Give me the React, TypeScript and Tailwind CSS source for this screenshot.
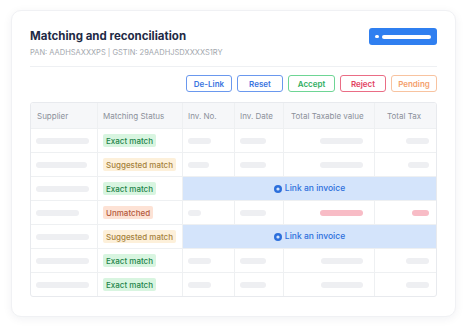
import React from "react";

type Status = "exact" | "suggested" | "unmatched";
type Row = {
  sup: number;
  status: Status;
  link?: boolean;
  inv?: number;
  date?: number;
  tax?: number;
  tt?: number;
  pink?: boolean;
};

const rows: Row[] = [
  { sup: 53, status: "exact", inv: 23, date: 26, tax: 43, tt: 23 },
  { sup: 51, status: "suggested", inv: 21, date: 26, tax: 43, tt: 21 },
  { sup: 53, status: "exact", link: true },
  { sup: 43, status: "unmatched", inv: 13, date: 26, tax: 43, tt: 17, pink: true },
  { sup: 53, status: "suggested", link: true },
  { sup: 53, status: "exact", inv: 23, date: 26, tax: 42, tt: 23 },
  { sup: 53, status: "exact", inv: 23, date: 26, tax: 42, tt: 23 },
];

function Bar({ w, pink }: { w: number; pink?: boolean }) {
  return (
    <div
      className={pink ? "h-[6px] rounded-full bg-[#f8bcc6]" : "h-[6px] rounded-full bg-[#eeeff2]"}
      style={{ width: w }}
    />
  );
}

function Badge({ s }: { s: Status }) {
  if (s === "exact")
    return (
      <span className="inline-flex h-[13px] items-center rounded-[2px] bg-[#d8f5e0] px-[3px] text-[8px] font-medium leading-none text-[#23844a]">
        Exact match
      </span>
    );
  if (s === "suggested")
    return (
      <span className="inline-flex h-[13px] items-center rounded-[2px] bg-[#fdf0da] px-[3px] text-[8px] font-medium leading-none text-[#a5823c]">
        Suggested match
      </span>
    );
  return (
    <span className="inline-flex h-[13px] items-center rounded-[2px] bg-[#fde2d5] px-[3px] text-[8px] font-medium leading-none text-[#b4593c]">
      Unmatched
    </span>
  );
}

const cell = "flex h-[24px] items-center border-t border-[#eef0f2]";

export default function App() {
  return (
    <div
      className="min-h-[332px] w-[474px] bg-white pl-[11px] pt-[10px]"
      style={{ fontFamily: "Inter, 'Noto Sans', sans-serif" }}
    >
      <div className="w-[445px] rounded-[10px] border border-[#f0f1f4] bg-white px-[18px] pb-[19px] pt-[17px] shadow-[0_2px_10px_rgba(20,30,60,0.06)]">
        <div className="flex items-start justify-between">
          <div>
            <div className="text-[11.5px] font-bold leading-[16px] text-[#1e2a45]">
              Matching and reconciliation
            </div>
            <div className="mt-[4px] text-[7.5px] leading-[10px] text-[#a3a7ae]">
              PAN: AADHSAXXXPS | GSTIN: 29AADHJSDXXXXS1RY
            </div>
          </div>
          <div className="flex h-[17px] w-[68px] items-center gap-[3px] rounded-[3px] bg-[#2f7ff0] pl-[6px]">
            <div className="h-[3.5px] w-[3.5px] rounded-full bg-white" />
            <div className="h-[4px] w-[49px] rounded-full bg-white" />
          </div>
        </div>
        <div className="mt-[8px] h-px bg-[#eef0f3]" />
        <div className="mt-[8px] flex justify-end gap-[5px]">
          <button className="h-[17px] w-[46px] rounded-[3px] border border-[#6a98ee] bg-white text-[8px] font-semibold text-[#3a74e0]">
            De-Link
          </button>
          <button className="h-[17px] w-[46px] rounded-[3px] border border-[#6a98ee] bg-white text-[8px] font-semibold text-[#3a74e0]">
            Reset
          </button>
          <button className="h-[17px] w-[47px] rounded-[3px] border border-[#6ed595] bg-white text-[8px] font-semibold text-[#2fae5f]">
            Accept
          </button>
          <button className="h-[17px] w-[46px] rounded-[3px] border border-[#ea6d85] bg-white text-[8px] font-semibold text-[#e2415f]">
            Reject
          </button>
          <button className="h-[17px] w-[46px] rounded-[3px] border border-[#f8c3a0] bg-white text-[8px] font-semibold text-[#f4a06c]">
            Pending
          </button>
        </div>
        <div className="mt-[10px] w-[407px] overflow-hidden rounded-[3px] border border-[#e8eaee]">
          <div className="grid grid-cols-[66px_85px_52px_49px_91px_62px] text-[8px] text-[#8b909a]">
            <div className="flex h-[25px] items-center bg-[#f6f7f9] pl-[6px]">Supplier</div>
            <div className="flex h-[25px] items-center border-l border-[#eef0f2] bg-[#f6f7f9] pl-[5px]">Matching Status</div>
            <div className="flex h-[25px] items-center border-l border-[#eef0f2] bg-[#f6f7f9] pl-[5px]">Inv. No.</div>
            <div className="flex h-[25px] items-center border-l border-[#eef0f2] bg-[#f6f7f9] pl-[5px]">Inv. Date</div>
            <div className="flex h-[25px] items-center border-l border-[#eef0f2] bg-[#f6f7f9] pl-[7px]">Total Taxable value</div>
            <div className="flex h-[25px] items-center border-l border-[#eef0f2] bg-[#f6f7f9] pl-[12px]">Total Tax</div>
            {rows.map((r, i) => (
              <React.Fragment key={i}>
                <div className={`${cell} pl-[5px]`}>
                  <Bar w={r.sup} />
                </div>
                <div className={`${cell} border-l pl-[5px]`}>
                  <Badge s={r.status} />
                </div>
                {r.link ? (
                  <div className={`${cell} col-span-4 justify-center gap-[3px] border-l bg-[#d4e4fb] text-[8.5px] font-medium text-[#2c6fdc]`}>
                    <svg width="8" height="8" viewBox="0 0 8 8">
                      <circle cx="4" cy="4" r="4" fill="#2c6fdc" />
                      <circle cx="4" cy="4" r="1.6" fill="#d4e4fb" />
                    </svg>
                    Link an invoice
                  </div>
                ) : (
                  <>
                    <div className={`${cell} border-l pl-[5px]`}>
                      <Bar w={r.inv!} />
                    </div>
                    <div className={`${cell} border-l pl-[5px]`}>
                      <Bar w={r.date!} />
                    </div>
                    <div className={`${cell} justify-end border-l pr-[11px]`}>
                      <Bar w={r.tax!} pink={r.pink} />
                    </div>
                    <div className={`${cell} justify-end border-l pr-[7px]`}>
                      <Bar w={r.tt!} pink={r.pink} />
                    </div>
                  </>
                )}
              </React.Fragment>
            ))}
          </div>
        </div>
      </div>
    </div>
  );
}
